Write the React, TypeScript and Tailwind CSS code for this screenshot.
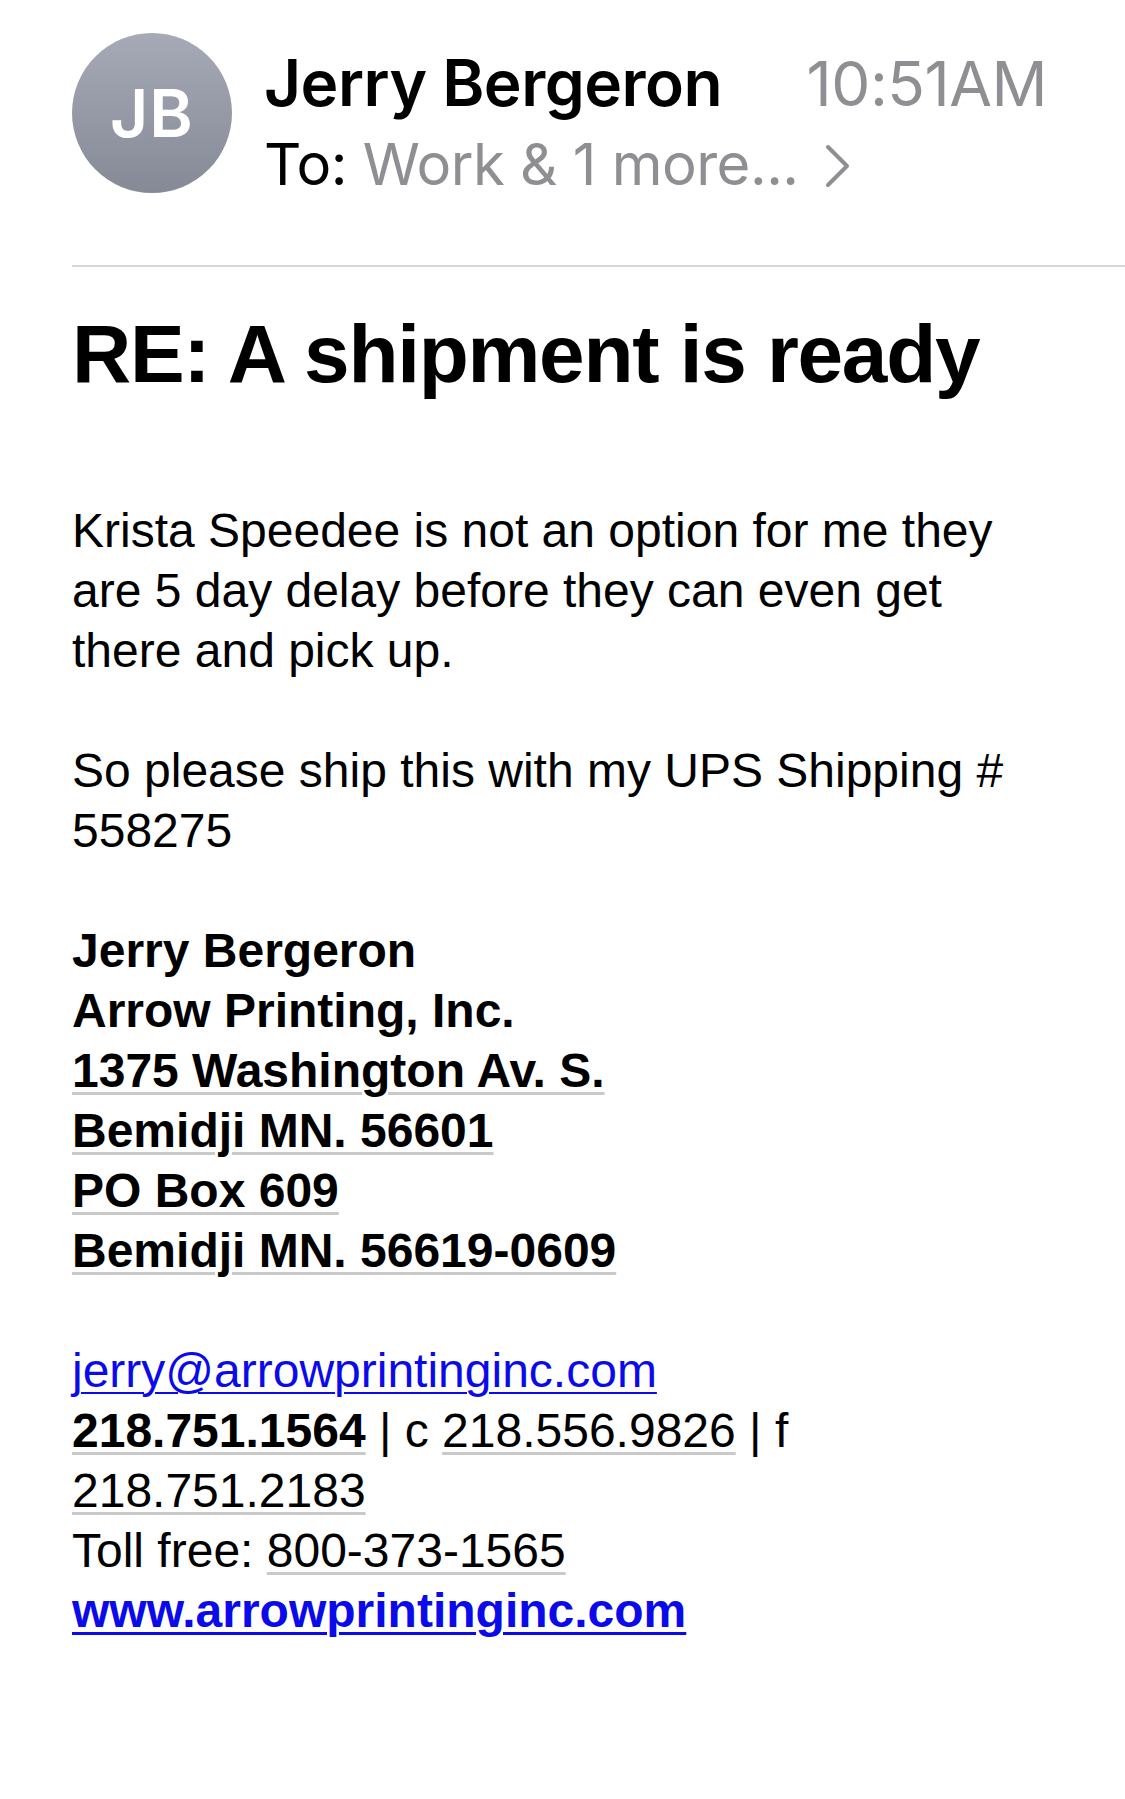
import React from 'react';

const grayLine =
  'underline decoration-[#c9c9c9] decoration-[3px] underline-offset-[5px]';

export default function App() {
  return (
    <div className="min-h-[1799px] w-[1125px] bg-white text-black">
      {/* header */}
      <header className="flex pl-[72px] pr-[78px] pt-[33px] font-['Inter',sans-serif]">
        <div className="flex h-[160px] w-[160px] shrink-0 items-center justify-center rounded-full bg-gradient-to-b from-[#a6aab7] to-[#858a96]">
          <span className="text-[66px] font-semibold leading-none tracking-[1px] text-white">
            JB
          </span>
        </div>
        <div className="ml-[32px] flex-1">
          <div className="mt-[14px] flex items-baseline justify-between leading-[72px]">
            <span className="text-[64px] font-semibold tracking-[-0.5px]">
              Jerry Bergeron
            </span>
            <span className="text-[62px] font-normal tracking-[-0.5px] text-[#8e8e93]">
              10:51AM
            </span>
          </div>
          <div className="mt-[8px] flex items-center text-[58px] leading-[72px] tracking-[-0.5px]">
            <span>To:&nbsp;</span>
            <span className="text-[#8e8e93]">Work &amp; 1 more...</span>
            <svg
              className="ml-[26px] mt-[4px]"
              width="26"
              height="44"
              viewBox="0 0 26 44"
              fill="none"
            >
              <polyline
                points="3,3 22,22 3,41"
                stroke="#8e8e93"
                strokeWidth="4"
                strokeLinecap="round"
                strokeLinejoin="round"
              />
            </svg>
          </div>
        </div>
      </header>

      <div className="ml-[72px] mt-[65px] border-t-2 border-[#d6d6d6]" />

      <main className="px-[72px] font-['Liberation_Sans',Arial,sans-serif]">
        <h1 className="mt-[46px] text-[82px] font-bold leading-[82px] tracking-[-1.3px]">
          RE: A shipment is ready
        </h1>

        <div className="mt-[106px] text-[48px] leading-[60px]">
          <p>
            Krista Speedee is not an option for me they
            <br />
            are 5 day delay before they can even get
            <br />
            there and pick up.
          </p>
          <br />
          <p>
            So please ship this with my UPS Shipping #
            <br />
            558275
          </p>
          <br />
          <div className="font-bold">
            <div>Jerry Bergeron</div>
            <div>Arrow Printing, Inc.</div>
            <div>
              <span className={grayLine}>1375 Washington Av. S.</span>
            </div>
            <div>
              <span className={grayLine}>Bemidji MN. 56601</span>
            </div>
            <div>
              <span className={grayLine}>PO Box 609</span>
            </div>
            <div>
              <span className={grayLine}>Bemidji MN. 56619-0609</span>
            </div>
          </div>
          <br />
          <div>
            <a className="text-[#0b0bea] underline decoration-2 underline-offset-[5px]">
              jerry@arrowprintinginc.com
            </a>
          </div>
          <div>
            <span className={`font-bold ${grayLine}`}>218.751.1564</span> | c{' '}
            <span className={grayLine}>218.556.9826</span> | f
            <br />
            <span className={grayLine}>218.751.2183</span>
          </div>
          <div>
            Toll free: <span className={grayLine}>800-373-1565</span>
          </div>
          <div>
            <a className="font-bold text-[#0b0bea] underline decoration-[3px] underline-offset-[5px]">
              www.arrowprintinginc.com
            </a>
          </div>
        </div>
      </main>
    </div>
  );
}
